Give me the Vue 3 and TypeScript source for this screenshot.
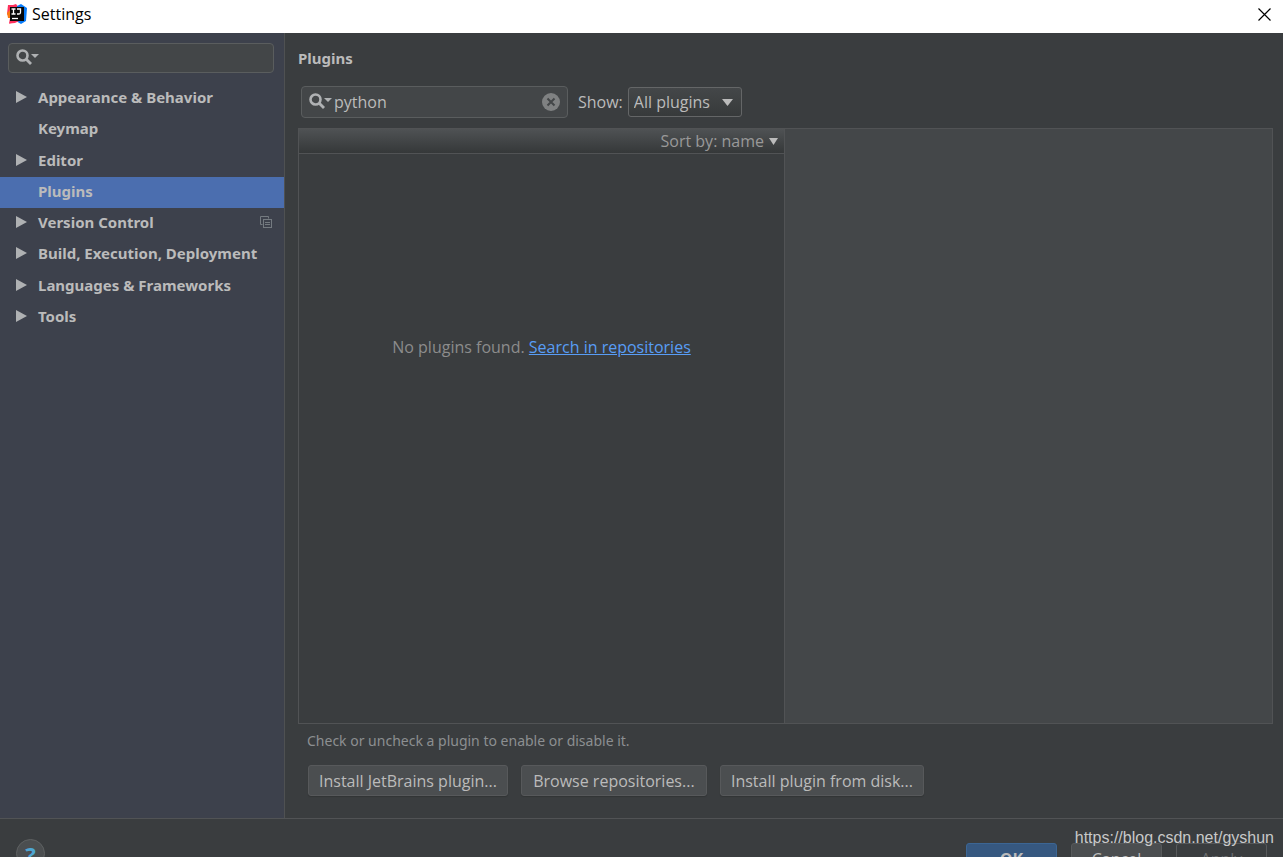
<script setup lang="ts">
import { ref } from 'vue'

interface Category {
  name: string
  expandable: boolean
  perProject?: boolean
}

const categories: Category[] = [
  { name: 'Appearance & Behavior', expandable: true },
  { name: 'Keymap', expandable: false },
  { name: 'Editor', expandable: true },
  { name: 'Plugins', expandable: false },
  { name: 'Version Control', expandable: true, perProject: true },
  { name: 'Build, Execution, Deployment', expandable: true },
  { name: 'Languages & Frameworks', expandable: true },
  { name: 'Tools', expandable: true },
]

const selected = ref('Plugins')
const settingsQuery = ref('')
const pluginQuery = ref('python')
const filter = ref('All plugins')
const filters = ['All plugins', 'Enabled', 'Disabled', 'Bundled', 'Custom']
const actions = ['Install JetBrains plugin...', 'Browse repositories...', 'Install plugin from disk...']
</script>

<template>
  <div class="window">
    <header class="titlebar">
      <svg class="logo" width="20" height="20" viewBox="0 0 20 20" aria-hidden="true">
        <path d="M1 1 6 1 9 0 12 4 5 19 2 19.500 3 14 0 10Z" fill="#fe315d" />
        <path d="M0 9 3 6 4 14 1 14Z" fill="#f97a12" />
        <path d="M10 2 14 0 20 4 19 17 14 20 9 17Z" fill="#087cfa" />
        <path d="M2 19.500 5 16 12 17 8 19Z" fill="#fe315d" />
        <rect x="3" y="3" width="14" height="14" fill="#080808" />
        <path d="M4.500 5h4M4.500 10h4M6.500 5v5M10 5h3.500v3.500q0 1.500-1.500 1.500h-2" fill="none" stroke="#fff" stroke-width="1.300" />
        <path d="M5 14.500h6" stroke="#fff" stroke-width="1.300" />
      </svg>
      <span class="title">Settings</span>
      <button class="close" type="button" aria-label="Close">
        <svg width="13" height="13" viewBox="0 0 13 13"><path d="M.5.5l12 12M12.500.5l-12 12" stroke="#000" stroke-width="1.200" /></svg>
      </button>
    </header>

    <div class="body">
      <aside class="sidebar">
        <div class="field">
          <svg class="lens" width="24" height="17" viewBox="0 0 24 17" aria-hidden="true">
            <circle cx="6.500" cy="6.500" r="5" fill="none" stroke="#afb1b3" stroke-width="2.600" />
            <path d="M10 10l5 5" stroke="#afb1b3" stroke-width="2.800" />
            <path d="M15 5h8l-4 4Z" fill="#afb1b3" />
          </svg>
          <input v-model="settingsQuery" type="text" aria-label="Search settings" />
        </div>
        <nav class="tree" aria-label="Settings categories">
          <button
            v-for="c in categories"
            :key="c.name"
            type="button"
            class="row"
            :class="{ selected: c.name === selected }"
            @click="selected = c.name"
          >
            <span class="arrow">
              <svg v-if="c.expandable" width="11" height="12" viewBox="0 0 11 12"><path d="M0 0 11 6 0 12Z" fill="#afb1b3" /></svg>
            </span>
            <span class="name">{{ c.name }}</span>
            <svg v-if="c.perProject" class="project" width="12" height="12" viewBox="0 0 12 12">
              <path d="M2.500 8.500h-2v-8h8v2" fill="none" stroke="#747a80" />
              <rect x="3.500" y="3.500" width="8" height="8" fill="none" stroke="#747a80" />
              <path d="M5 6.500h5M5 8.500h5" stroke="#747a80" />
            </svg>
          </button>
        </nav>
      </aside>

      <main class="content">
        <h1>Plugins</h1>
        <div class="toolbar">
          <div class="field search">
            <svg class="lens" width="24" height="17" viewBox="0 0 24 17" aria-hidden="true">
              <circle cx="6.500" cy="6.500" r="5" fill="none" stroke="#afb1b3" stroke-width="2.600" />
              <path d="M10 10l5 5" stroke="#afb1b3" stroke-width="2.800" />
              <path d="M15 5h8l-4 4Z" fill="#afb1b3" />
            </svg>
            <input v-model="pluginQuery" type="text" aria-label="Search plugins" />
            <button class="clear" type="button" aria-label="Clear search" @click="pluginQuery = ''">
              <svg width="18" height="18" viewBox="0 0 18 18">
                <circle cx="9" cy="9" r="9" fill="#7f8182" />
                <path d="M5.500 5.500l7 7M12.500 5.500l-7 7" stroke="#434648" stroke-width="2" />
              </svg>
            </button>
          </div>
          <label for="show">Show:</label>
          <div class="combo">
            <select id="show" v-model="filter">
              <option v-for="f in filters" :key="f">{{ f }}</option>
            </select>
            <svg width="11" height="7" viewBox="0 0 11 7" aria-hidden="true"><path d="M0 0h11L5.500 7Z" fill="#bbb" /></svg>
          </div>
        </div>

        <div class="panes">
          <section class="list">
            <div class="sortbar">
              <button type="button">
                Sort by: name
                <svg width="9" height="7" viewBox="0 0 9 7"><path d="M0 0h9L4.500 7Z" fill="#bbb" /></svg>
              </button>
            </div>
            <p class="empty">No plugins found. <a href="#">Search in repositories</a></p>
          </section>
          <section class="details" aria-label="Plugin details"></section>
        </div>

        <p class="hint">Check or uncheck a plugin to enable or disable it.</p>
        <div class="actions">
          <button v-for="a in actions" :key="a" class="btn" type="button">{{ a }}</button>
        </div>
      </main>
    </div>

    <footer class="footer">
      <button class="help" type="button" aria-label="Help">?</button>
      <div class="dialog-buttons">
        <button class="btn primary" type="button">OK</button>
        <button class="btn" type="button">Cancel</button>
        <button class="btn off" type="button" disabled>Apply</button>
      </div>
      <span class="watermark">https://blog.csdn.net/gyshun</span>
    </footer>
  </div>
</template>

<style>
body {
  margin: 0;
  background: #3a3d3f;
}
</style>

<style scoped>
.window {
  display: flex;
  flex-direction: column;
  height: 100vh;
  overflow: hidden;
  background: #3a3d3f;
  color: #bbb;
  font: 16px/22px "Open Sans", "Noto Sans", sans-serif;
}
.window * {
  box-sizing: border-box;
}
button,
input,
select {
  margin: 0;
  padding: 0;
  border: 0;
  background: none;
  color: inherit;
  font: inherit;
  outline: 0;
}
svg {
  display: block;
  flex: none;
}

.titlebar {
  display: flex;
  flex: none;
  align-items: center;
  height: 33px;
  padding: 0 12px 5px 7px;
  background: #fff;
  color: #000;
}
.title {
  flex: 1;
  padding-left: 5px;
  font-size: 16px;
}

.body {
  display: flex;
  flex: 1;
  min-height: 0;
}
.sidebar {
  flex: none;
  width: 285px;
  padding-top: 10px;
  border-right: 1px solid #4f5152;
  background: #3d414c;
}
.field {
  display: flex;
  align-items: center;
  height: 30px;
  margin: 0 10px 0 8px;
  padding: 0 7px;
  border: 1px solid #5a5d5e;
  border-radius: 4px;
  background: #434648;
}
.field input {
  flex: 1;
  min-width: 0;
}
.lens {
  margin-bottom: 2px;
}
.tree {
  display: grid;
  grid-auto-rows: 1fr;
  height: 250px;
  margin-top: 10px;
}
.row {
  display: flex;
  align-items: center;
  padding: 0 12px 3px 16px;
  font-family: "Noto Sans", sans-serif;
  font-size: 15px;
  font-weight: 700;
  text-align: left;
}
.row.selected {
  background: #4b6eaf;
}
.arrow {
  width: 22px;
}
.name {
  flex: 1;
  white-space: nowrap;
}

.content {
  display: flex;
  flex: 1;
  flex-direction: column;
  min-width: 0;
  padding: 14px 10px 22px 13px;
}
h1 {
  margin: 0;
  font-family: "Noto Sans", sans-serif;
  font-size: 15px;
  line-height: 22px;
}
.toolbar {
  display: flex;
  align-items: center;
  height: 32px;
  margin: 17px 0 10px 3px;
}
.search {
  width: 267px;
  height: 32px;
  margin: 0 10px 0 0;
}
.search .lens {
  margin-right: 1px;
}
.combo {
  display: grid;
  align-items: center;
  height: 30px;
  margin-left: 5px;
  border: 1px solid #646667;
  border-radius: 3px;
  background: linear-gradient(#444749, #373a3b);
}
.combo select,
.combo svg {
  grid-area: 1 / 1;
}
.combo select {
  width: 112px;
  height: 28px;
  padding-left: 5px;
  appearance: none;
}
.combo svg {
  justify-self: end;
  margin-right: 8px;
  pointer-events: none;
}

.panes {
  display: grid;
  flex: 1;
  grid-template-columns: 486fr 487fr;
  min-height: 0;
  border: 1px solid #515355;
}
.list {
  display: flex;
  flex-direction: column;
  border-right: 1px solid #515355;
}
.sortbar {
  display: flex;
  flex: none;
  justify-content: flex-end;
  height: 25px;
  padding-right: 6px;
  border-bottom: 1px solid #515355;
  background: linear-gradient(#4f5254, #353839);
  color: #999;
}
.sortbar button {
  display: flex;
  align-items: center;
  gap: 5px;
}
.empty {
  margin: 182px 0 0;
  color: #8c8c8c;
  text-align: center;
}
.empty a {
  color: #589df6;
}
.details {
  background: #444749;
}

.hint {
  margin: 6px 0 13px 9px;
  color: #8c8f91;
  font-family: "Noto Sans", sans-serif;
  font-size: 14px;
}
.actions {
  display: flex;
  gap: 13px;
  margin-left: 10px;
}
.btn {
  height: 31px;
  padding: 0 10px;
  border: 1px solid #57595b;
  border-radius: 3px;
  background: #4b4e50;
  box-shadow: 0 1px 1px #323536;
  white-space: nowrap;
}
.actions .btn {
  min-width: 186px;
}

.footer {
  position: relative;
  display: flex;
  flex: none;
  align-items: flex-start;
  justify-content: space-between;
  height: 39px;
  padding: 0 16px;
  border-top: 1px solid #515355;
  overflow: hidden;
}
.help {
  width: 29px;
  height: 29px;
  margin-top: 20px;
  border: 1px solid #5e6162;
  border-radius: 50%;
  background: #4b4e50;
  color: #4ea6d2;
  font-family: "Noto Sans", sans-serif;
  font-size: 22px;
  font-weight: 700;
  line-height: 20px;
}
.dialog-buttons {
  display: flex;
  gap: 14px;
  margin-top: 24px;
}
.dialog-buttons .btn {
  width: 91px;
}
.btn.primary {
  border-color: #3c6694;
  background: #365880;
  font-weight: 700;
}
.btn.off {
  background: none;
  box-shadow: none;
  color: #696b6d;
}
.watermark {
  position: absolute;
  top: 8px;
  right: 9px;
  color: #c8c9c9;
  font-family: "Liberation Sans", Arial, sans-serif;
}
</style>
